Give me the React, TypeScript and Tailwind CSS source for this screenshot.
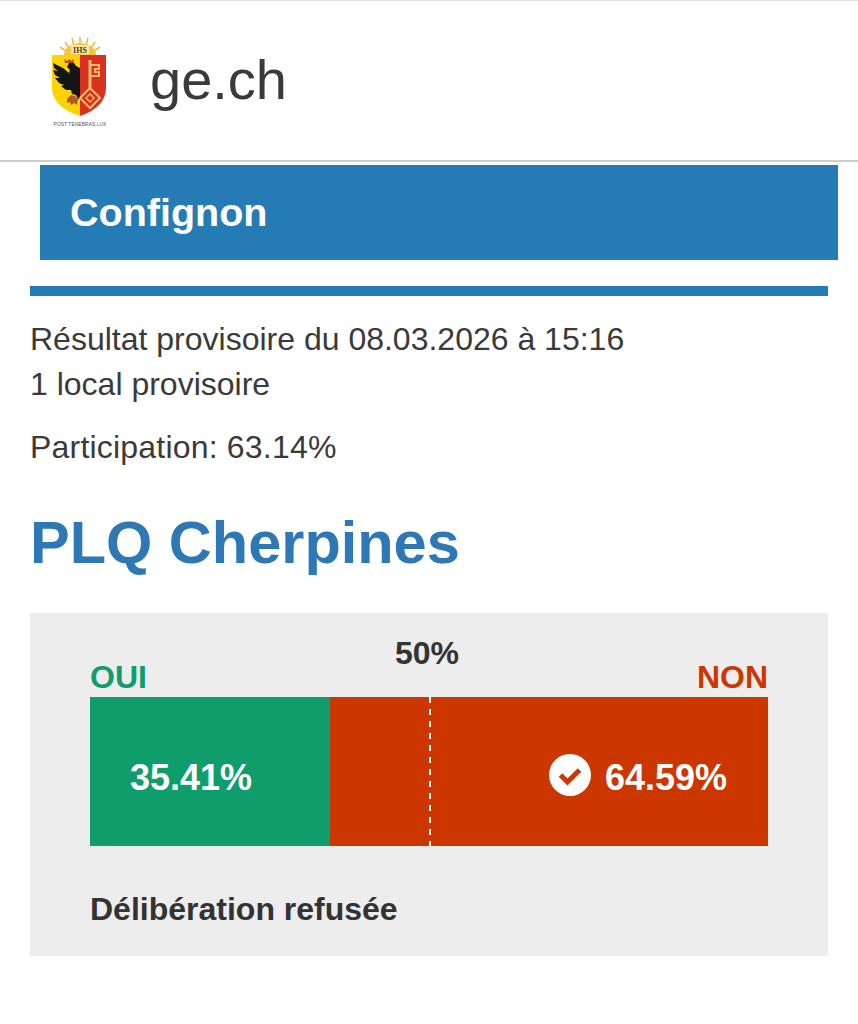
const font = "font-['Liberation_Sans',Arial,sans-serif]";

function Crest() {
  return (
    <svg width="62" height="92" viewBox="0 0 62 92" className="block">
      {/* sun */}
      <g stroke="#eebd3c" strokeWidth="1.6">
        <line x1="32" y1="0" x2="32" y2="8" />
        <line x1="24" y1="1" x2="26" y2="9" />
        <line x1="40" y1="1" x2="38" y2="9" />
        <line x1="17" y1="5" x2="21" y2="11" />
        <line x1="47" y1="5" x2="43" y2="11" />
        <line x1="12" y1="10" x2="18" y2="14" />
        <line x1="52" y1="10" x2="46" y2="14" />
      </g>
      <path d="M16 18a16 12 0 0 1 32 0z" fill="#f4c542" />
      <rect x="23" y="8" width="18" height="9" fill="#fbe9a8" />
      <text x="32" y="16" textAnchor="middle" fontSize="8" fontWeight="700" fill="#4a3a10" fontFamily="Liberation Serif">IHS</text>
      {/* shield */}
      <path d="M32 18H4v32c0 15 12 24 28 29z" fill="#fbd400" />
      <path d="M32 18h26v32c0 15-11 24-26 29z" fill="#d9301f" />
      {/* eagle */}
      <path d="M32 31l-4-2-2-3-5 0-2 4 3 3-1 3-6-5-10-5 1 5 4 3-5-1 2 5 5 3-5 0 4 5 5 2-3 1 5 4 5 0 1 4 4 1 2 4h2z" fill="#151515" />
      <path d="M16 22l3 2 2-2 2 2 2-2 1 4h-9z" fill="#c4481f" />
      <path d="M19 62l4-4 4 1 3 3-1 6-3-2-3 2-1-3-3 1z" fill="#b5562a" />
      {/* key */}
      <g stroke="#ecbf6b" fill="none">
        <line x1="42" y1="23" x2="42" y2="53" strokeWidth="3" />
        <path d="M43 28h8v4h-4v3h4v4h-8" strokeWidth="2" />
        <path d="M42 51l10 10-10 10-10-10z" strokeWidth="2" />
        <path d="M42 57l4 4-4 4-4-4z" strokeWidth="1.4" />
      </g>
      <text x="32" y="89" textAnchor="middle" fontSize="5" fill="#555" fontFamily="Liberation Sans">POST TENEBRAS LUX</text>
    </svg>
  );
}

function CheckBadge() {
  return (
    <svg width="42" height="42" viewBox="0 0 42 42" className="shrink-0">
      <circle cx="21" cy="21" r="21" fill="#fff" />
      <path d="M11.5 21l7 7L30.500 16" fill="none" stroke="#cc3700" strokeWidth="5" />
    </svg>
  );
}

export default function App() {
  return (
    <div className={`${font} h-[1024px] w-[858px] overflow-hidden bg-white text-[#333]`}>
      <header className="flex h-[162px] items-center border-t border-b-2 border-t-[#e2e2e2] border-b-[#cfcfcf] pl-[48px]">
        <div className="mt-[4px]">
          <Crest />
        </div>
        <span className="ml-[40px] mb-[2px] text-[56px] leading-none text-[#3a3a3a]">ge.ch</span>
      </header>

      <div className="mt-[3px] ml-[40px] mr-[20px] flex h-[95px] items-center bg-[#257cb4] pl-[30px]">
        <h2 className="text-[39.500px] font-bold leading-none text-white">Confignon</h2>
      </div>

      <main className="mx-[30px] mt-[26px]">
        <div className="h-[10px] bg-[#257cb4]" />

        <div className="mt-[21px] text-[32px] leading-[45px] text-[#3a3a3a]">
          <p>Résultat provisoire du 08.03.2026 à 15:16</p>
          <p>1 local provisoire</p>
          <p className="mt-[18px] tracking-[0.2px]">Participation: 63.14%</p>
        </div>

        <h1 className="mt-[39px] text-[59.500px] font-bold leading-[68px] text-[#2e78b5]">PLQ Cherpines</h1>

        <section className="mt-[36px] h-[343px] bg-[#ededed] px-[60px] pt-[24px]">
          <div className="relative flex h-[60px] items-end justify-between pb-[4px] text-[32px] font-bold leading-none">
            <span className="text-[#0f9d6b]">OUI</span>
            <span className="absolute left-[305px] top-0 text-[#333]">50%</span>
            <span className="text-[#cc3700]">NON</span>
          </div>

          <div className="relative flex h-[149px] text-[36px] font-bold text-white">
            <div className="flex w-[240px] items-center bg-[#0f9d6b] pl-[40px] pt-[13px]">35.41%</div>
            <div className="flex flex-1 items-center justify-end gap-[14px] bg-[#cc3700] pr-[42px] pt-[6px]">
              <CheckBadge />
              <span className="w-[121px] pt-[7px]">64.59%</span>
            </div>
            <div className="absolute left-[339px] top-0 h-full w-[2px] bg-[repeating-linear-gradient(to_bottom,#fff_0,#fff_6px,transparent_6px,transparent_12px)]" />
          </div>

          <p className="mt-[47px] text-[32px] font-bold leading-none text-[#333]">Délibération refusée</p>
        </section>
      </main>
    </div>
  );
}
